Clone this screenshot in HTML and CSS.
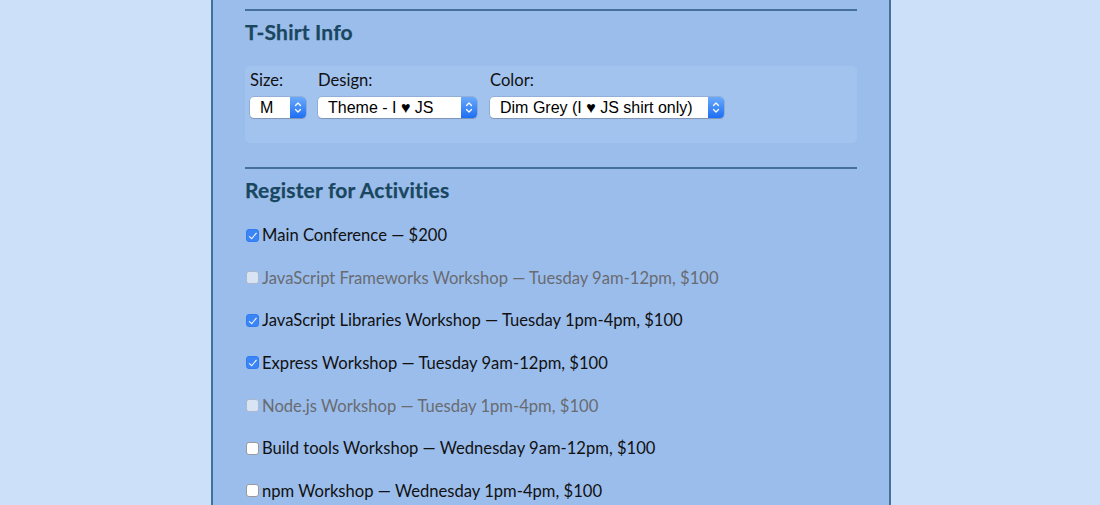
FILE: index.html
```html
<!DOCTYPE html>
<html lang="en">
<head>
<meta charset="utf-8">
<title>Registration</title>
<link rel="stylesheet" href="styles.css">
</head>
<body>
<div class="page">
  <section class="section">
    <h2 class="heading">T-Shirt Info</h2>
    <div class="shirt-box">
      <div class="field">
        <label class="field-label" for="size">Size:</label>
        <span class="select size-select">
          <select id="size"><option>M</option></select>
          <svg class="arrows" width="16" height="21" viewBox="0 0 16 21"><path d="M5.5 8.5 L8 6 L10.5 8.5 M5.5 12.5 L8 15 L10.5 12.5" fill="none" stroke="#fff" stroke-width="1.3" stroke-linecap="round" stroke-linejoin="round"/></svg>
        </span>
      </div>
      <div class="field">
        <label class="field-label" for="design">Design:</label>
        <span class="select design-select">
          <select id="design"><option>Theme - I &#9829; JS</option></select>
          <svg class="arrows" width="16" height="21" viewBox="0 0 16 21"><path d="M5.5 8.5 L8 6 L10.5 8.5 M5.5 12.5 L8 15 L10.5 12.5" fill="none" stroke="#fff" stroke-width="1.3" stroke-linecap="round" stroke-linejoin="round"/></svg>
        </span>
      </div>
      <div class="field field-color">
        <label class="field-label" for="color">Color:</label>
        <span class="select color-select">
          <select id="color"><option>Dim Grey (I &#9829; JS shirt only)</option></select>
          <svg class="arrows" width="16" height="21" viewBox="0 0 16 21"><path d="M5.5 8.5 L8 6 L10.5 8.5 M5.5 12.5 L8 15 L10.5 12.5" fill="none" stroke="#fff" stroke-width="1.3" stroke-linecap="round" stroke-linejoin="round"/></svg>
        </span>
      </div>
    </div>
  </section>
  <section class="section">
    <h2 class="heading">Register for Activities</h2>
    <ul class="activities">
      <li class="activity"><label><input type="checkbox" class="check" checked> Main Conference — $200</label></li>
      <li class="activity disabled"><label><input type="checkbox" class="check" disabled> JavaScript Frameworks Workshop — Tuesday 9am-12pm, $100</label></li>
      <li class="activity"><label><input type="checkbox" class="check" checked> JavaScript Libraries Workshop — Tuesday 1pm-4pm, $100</label></li>
      <li class="activity"><label><input type="checkbox" class="check" checked> Express Workshop — Tuesday 9am-12pm, $100</label></li>
      <li class="activity disabled"><label><input type="checkbox" class="check" disabled> Node.js Workshop — Tuesday 1pm-4pm, $100</label></li>
      <li class="activity"><label><input type="checkbox" class="check"> Build tools Workshop — Wednesday 9am-12pm, $100</label></li>
      <li class="activity"><label><input type="checkbox" class="check"> npm Workshop — Wednesday 1pm-4pm, $100</label></li>
    </ul>
  </section>
</div>
</body>
</html>
```

FILE: styles.css
```css
html, body {
  margin: 0;
  padding: 0;
  height: 100%;
  overflow: hidden;
}
body {
  background: #cde0fa;
  font-family: "Lato", "Open Sans", sans-serif;
  color: #111;
}
.page {
  width: 612px;
  min-height: 505px;
  margin: 0 0 0 211px;
  padding: 9px 32px 0;
  background: #9bbdec;
  border-left: 2px solid #44709a;
  border-right: 2px solid #44709a;
  box-sizing: content-box;
}
.section {
  border-top: 2px solid #44709a;
  margin-bottom: 24px;
}
.heading {
  margin: 9px 0 0;
  font-size: 21px;
  line-height: 24px;
  font-weight: 700;
  letter-spacing: 0.2px;
  color: #1a4760;
  -webkit-text-stroke: 0.25px #1a4760;
}
.shirt-box {
  margin-top: 22px;
  background: #a3c3ef;
  border-radius: 5px;
  padding: 4px 4px 25px 5px;
  display: flex;
  gap: 12px;
}
.field {
  display: flex;
  flex-direction: column;
  gap: 7px;
}
.field-color {
  margin-left: 1px;
}
.field-label {
  font-size: 16.6px;
  line-height: 20px;
  color: #111;
}
.select {
  position: relative;
  display: inline-block;
  height: 21px;
}
.size-select { width: 56px; }
.design-select { width: 159px; }
.color-select { width: 234px; }
.select select {
  -webkit-appearance: none;
  appearance: none;
  display: block;
  width: 100%;
  height: 21px;
  margin: 0;
  padding: 0 18px 0 10px;
  border: none;
  border-radius: 4px;
  background: #fff;
  box-shadow: 0 0 0 0.5px rgba(0, 0, 0, 0.2), 0 1px 1px rgba(0, 0, 0, 0.15);
  font-family: "Liberation Sans", Arial, sans-serif;
  font-size: 16px;
  color: #000;
  line-height: 21px;
}
.arrows {
  position: absolute;
  top: 0;
  right: 0;
  width: 16px;
  height: 21px;
  border-radius: 0 4px 4px 0;
  background: linear-gradient(#6aa9fb, #1d6ef4);
  pointer-events: none;
}
.activities {
  list-style: none;
  margin: 23px 0 0;
  padding: 0;
}
.activity {
  font-size: 16.6px;
  line-height: 20px;
  height: 20px;
  margin-bottom: 22.67px;
  color: #111;
}
.activity label {
  display: flex;
  align-items: center;
}
.activity.disabled {
  color: #686b70;
}
.check {
  -webkit-appearance: none;
  appearance: none;
  width: 13px;
  height: 13px;
  margin: 0 3px 0 1px;
  border: 1px solid #9a9a9a;
  border-radius: 3px;
  background: #fff;
  box-sizing: border-box;
  flex: none;
  position: relative;
}
.check:checked {
  border-color: #2f7cf0;
  background: #3b85f6;
}
.check:checked::after {
  content: "";
  position: absolute;
  left: 3.5px;
  top: 1px;
  width: 3px;
  height: 6.5px;
  border: solid #fff;
  border-width: 0 1.6px 1.6px 0;
  transform: rotate(40deg);
}
.check:disabled {
  background: #d8e3f3;
  border-color: #aab8cc;
}
```
